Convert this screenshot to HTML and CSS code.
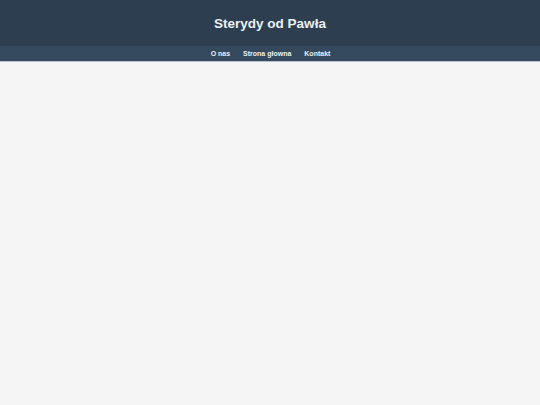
FILE: index.html
```html
<!DOCTYPE html>
<html lang="pl">
<head>
    <meta charset="UTF-8">
    <meta name="viewport" content="width=device-width, initial-scale=1.0">
    <title>Sterydy od Pawła</title>
    <link rel="stylesheet" href="styles.css">
</head>
<body>
    <header>
        <h1>Sterydy od Pawła</h1>
    </header>
    <nav>
        <a href="#">O nas</a>
        <a href="#">Strona głowna</a>
        <a href="#">Kontakt</a>
    </nav>
    <main></main>
</body>
</html>
```

FILE: styles.css
```css
body {
    font-family: "Liberation Sans", Arial, sans-serif;
    background-color: #f5f5f5;
    margin: 0;
    padding: 0;
}

header {
    background-color: #2c3e50;
    color: #ecf0f1;
    text-align: center;
    height: 46px;
    display: flex;
    align-items: center;
    justify-content: center;
}

header h1 {
    margin: 0;
    font-size: 13.5px;
    font-weight: bold;
}

nav {
    background-color: #34495e;
    height: 15px;
    display: flex;
    align-items: center;
    justify-content: center;
    gap: 13px;
    padding-left: 1px;
    border-bottom: 1px solid #b8c4d0;
}

nav a {
    color: #ecf0f1;
    text-decoration: none;
    font-size: 7px;
    font-weight: bold;
}
```
